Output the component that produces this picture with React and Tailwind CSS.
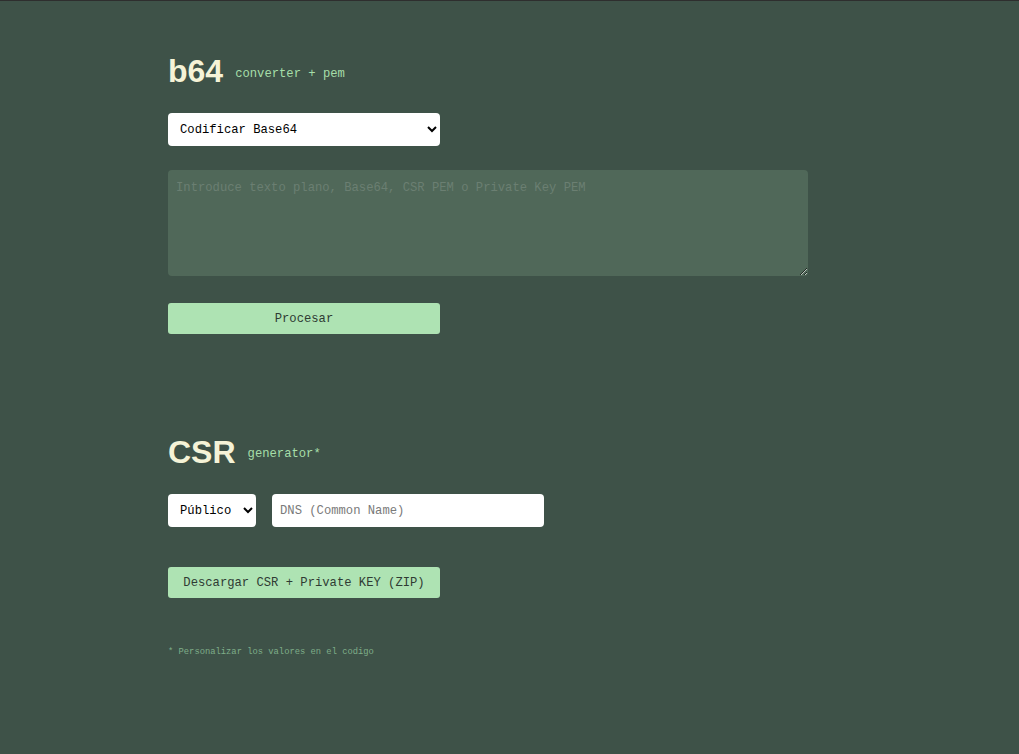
export default function App() {
  return (
    <div className="min-h-[754px] w-full bg-[#3e5248] border-t border-[#2e2e2e] font-['Liberation_Mono','DejaVu_Sans_Mono',monospace]">
      <div className="w-[640px] ml-[168px] pt-[52px]">
        <div className="flex items-center gap-[12px]">
          <h1 className="text-[32px] font-bold text-[#f5f3d7] leading-[37px] font-['Liberation_Sans',Arial,sans-serif]">b64</h1>
          <span className="text-[12.2px] text-[#a6dfa9] mt-[5px]">converter + pem</span>
        </div>
        <select className="mt-[23px] w-[272px] h-[33px] bg-white text-black rounded-[4px] px-[8px] text-[12.2px] outline-none" defaultValue="enc">
          <option value="enc">Codificar Base64</option>
          <option value="dec">Decodificar Base64</option>
        </select>
        <textarea
          className="mt-[24px] block w-[640px] h-[106px] bg-[#506859] rounded-[4px] p-[8px] pt-[9px] text-[12.2px] text-white placeholder:text-[#6b7f72] outline-none"
          placeholder="Introduce texto plano, Base64, CSR PEM o Private Key PEM"
        />
        <button className="mt-[27px] block w-[272px] h-[31px] bg-[#aee3b3] rounded-[3px] text-[12.2px] text-[#2f3b33] pt-[2px]">Procesar</button>

        <div className="flex items-center gap-[12px] mt-[100px]">
          <h2 className="text-[32px] font-bold text-[#f5f3d7] leading-[37px] font-['Liberation_Sans',Arial,sans-serif]">CSR</h2>
          <span className="text-[12.2px] text-[#a6dfa9] mt-[4px]">generator*</span>
        </div>
        <div className="flex gap-[16px] mt-[23px]">
          <select className="w-[88px] h-[33px] bg-white text-black rounded-[4px] px-[8px] text-[12.2px] outline-none" defaultValue="pub">
            <option value="pub">Público</option>
            <option value="priv">Privado</option>
          </select>
          <input
            className="w-[272px] h-[33px] bg-white rounded-[4px] px-[8px] text-[12.2px] placeholder:text-[#7a7a7a] outline-none"
            placeholder="DNS (Common Name)"
          />
        </div>
        <button className="mt-[40px] block w-[272px] h-[31px] bg-[#aee3b3] rounded-[3px] text-[12.2px] text-[#2f3b33] pt-[2px]">Descargar CSR + Private KEY (ZIP)</button>
        <p className="mt-[48px] text-[8.8px] text-[#7fae89]">* Personalizar los valores en el codigo</p>
      </div>
    </div>
  );
}
